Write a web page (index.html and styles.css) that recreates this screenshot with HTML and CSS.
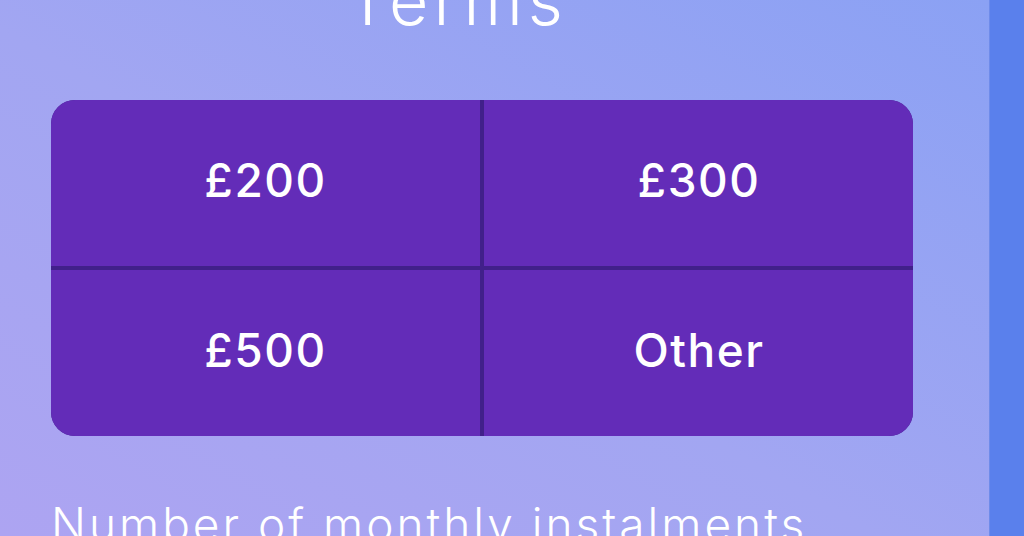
FILE: index.html
```html
<!DOCTYPE html>
<html lang="en">
<head>
<meta charset="utf-8">
<title>Terms</title>
<link rel="stylesheet" href="styles.css">
</head>
<body>
<div class="page">
  <main class="main">
    <h1 class="title">Terms</h1>
    <div class="amounts">
      <button class="amount">£200</button>
      <button class="amount">£300</button>
      <button class="amount">£500</button>
      <button class="amount">Other</button>
    </div>
    <p class="label">Number of monthly instalments</p>
  </main>
  <aside class="side"></aside>
</div>
</body>
</html>
```
FILE: styles.css
```css
html, body {
  margin: 0;
  padding: 0;
  height: 100%;
  overflow: hidden;
}
body {
  font-family: "Inter", "Open Sans", sans-serif;
  color: #ffffff;
}
.page {
  display: flex;
  height: 536px;
  background: linear-gradient(30deg, #ada4f2 0%, #a2a6f2 45%, #8aa1f4 100%);
}
.main {
  flex: 1;
  padding: 0 76px 0 51px;
  overflow: hidden;
}
.title {
  margin: -34px 0 0 0;
  text-align: center;
  font-size: 68px;
  line-height: 68px;
  font-weight: 300;
  padding-right: 50px;
  letter-spacing: 5px;
}
.amounts {
  margin-top: 66px;
  display: grid;
  grid-template-columns: 429px 430px;
  grid-template-rows: 166px 166px;
  gap: 4px;
  background: #41208a;
  border-radius: 24px;
  overflow: hidden;
}
.amount {
  border: 0;
  margin: 0;
  background: #632cb8;
  color: #ffffff;
  font-family: "Inter", "Open Sans", sans-serif;
  font-size: 46px;
  font-weight: 500;
  letter-spacing: 1.5px;
  padding: 0 0 6px 0;
}
.label {
  margin: 62px 0 0 0;
  font-size: 46px;
  line-height: 52px;
  font-weight: 300;
  letter-spacing: 3px;
  white-space: nowrap;
}
.side {
  width: 34px;
  background: #5a80ec;
  border-left: 1px solid #6e8bea;
}
```
